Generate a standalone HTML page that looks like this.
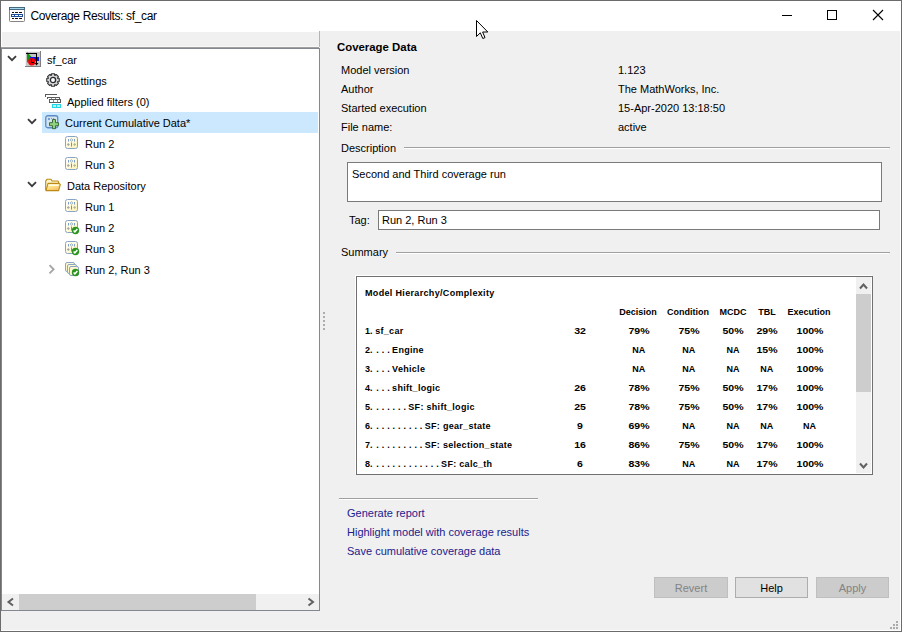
<!DOCTYPE html>
<html><head><meta charset="utf-8">
<style>
html,body{margin:0;padding:0;}
body{width:902px;height:632px;position:relative;overflow:hidden;background:#f0f0f0;font-family:"Liberation Sans",sans-serif;color:#000;}
.a{position:absolute;}
.t{position:absolute;white-space:nowrap;font-size:11px;line-height:11px;}
.b{font-weight:bold;}
.hb{position:absolute;font-size:9px;line-height:9px;font-weight:bold;white-space:nowrap;}
.c{text-align:center;}
</style></head><body>
<!-- window frame -->
<div class="a" style="left:0;top:0;width:902px;height:632px;background:#f0f0f0;"></div>
<!-- title bar -->
<div class="a" style="left:1px;top:1px;width:900px;height:30px;background:#fff;"></div>
<!-- borders -->
<div class="a" style="left:0;top:0;width:902px;height:1px;background:#6b6b6b;"></div>
<div class="a" style="left:0;top:0;width:1px;height:632px;background:#6b6b6b;"></div>
<div class="a" style="left:901px;top:0;width:1px;height:632px;background:#6b6b6b;"></div>
<div class="a" style="left:0;top:631px;width:902px;height:1px;background:#6b6b6b;"></div>
<div class="a" style="left:1px;top:630px;width:900px;height:1px;background:#fff;"></div>
<div class="a" style="left:900px;top:31px;width:1px;height:600px;background:#fff;"></div>

<!-- title icon -->
<svg class="a" style="left:9px;top:7px" width="16" height="15" viewBox="0 0 16 15">
<rect x="0.5" y="0.5" width="15" height="14" rx="0.8" fill="#fff" stroke="#858585"/>
<rect x="0" y="0" width="16" height="3" fill="#44697c"/>
<rect x="1" y="1" width="14" height="1" fill="#a6d6f0"/>
<rect x="3" y="5" width="2" height="1" fill="#111"/><rect x="6" y="5" width="3" height="1" fill="#111"/><rect x="10" y="5" width="3" height="1" fill="#111"/>
<rect x="2" y="7" width="12" height="3" fill="#1c4f9c"/>
<rect x="3" y="8" width="2" height="1" fill="#fff"/><rect x="6" y="8" width="3" height="1" fill="#fff"/><rect x="10" y="8" width="3" height="1" fill="#fff"/>
<rect x="3" y="11" width="2" height="1" fill="#111"/><rect x="6" y="11" width="3" height="1" fill="#111"/><rect x="10" y="11" width="3" height="1" fill="#111"/>
</svg>
<div class="t" style="left:30.5px;top:10px;font-size:12px;line-height:12px;letter-spacing:-0.36px;">Coverage Results: sf_car</div>

<!-- window controls -->
<div class="a" style="left:782px;top:15px;width:10px;height:1px;background:#000;"></div>
<div class="a" style="left:827px;top:10px;width:8px;height:8px;border:1px solid #000;"></div>
<svg class="a" style="left:872px;top:9px" width="12" height="12" viewBox="0 0 12 12"><path d="M1 1L11 11M11 1L1 11" stroke="#000" stroke-width="1.1"/></svg>

<!-- mouse cursor -->
<svg class="a" style="left:476px;top:20px" width="13" height="20" viewBox="0 0 13 20">
<path d="M0.5 0.5 L0.5 16.5 L4.3 12.8 L6.8 18.5 L9 17.6 L6.6 12 L11.8 12 Z" fill="#fff" stroke="#000" stroke-width="1" stroke-linejoin="miter"/>
</svg>

<!-- left tree panel -->
<div class="a" style="left:1px;top:31px;width:318px;height:16px;background:#fff;"></div>
<div class="a" style="left:2px;top:32px;width:317px;height:15px;background:#f0f0f0;"></div>
<div class="a" style="left:319px;top:31px;width:1px;height:16px;background:#b4b4b4;"></div>
<div class="a" style="left:1px;top:46px;width:318px;height:1px;background:#f8f8f8;"></div>
<div class="a" style="left:1px;top:47px;width:318px;height:1px;background:#a0a0a0;"></div>
<div class="a" style="left:1px;top:48px;width:317px;height:561px;border:1px solid #828790;background:#fff;"></div>
<!-- selection -->
<div class="a" style="left:42px;top:112px;width:276px;height:21px;background:#cce8ff;"></div>

<!-- chevrons -->
<svg class="a" style="left:7px;top:55px" width="10" height="7"><path d="M1 1.2L5 5.2L9 1.2" fill="none" stroke="#3a3a3a" stroke-width="1.8"/></svg>
<svg class="a" style="left:27px;top:118px" width="10" height="7"><path d="M1 1.2L5 5.2L9 1.2" fill="none" stroke="#3a3a3a" stroke-width="1.8"/></svg>
<svg class="a" style="left:27px;top:181px" width="10" height="7"><path d="M1 1.2L5 5.2L9 1.2" fill="none" stroke="#3a3a3a" stroke-width="1.8"/></svg>
<svg class="a" style="left:48px;top:264px" width="8" height="11"><path d="M1.5 1.2L5.6 5.3L1.5 9.4" fill="none" stroke="#a6a6a6" stroke-width="1.9"/></svg>

<!-- sf_car icon -->
<svg class="a" style="left:25px;top:51px" width="16" height="16" viewBox="0 0 16 16" shape-rendering="crispEdges">
<rect x="0" y="0" width="16" height="16" fill="#7f7f7f"/>
<rect x="0" y="0" width="15" height="15" fill="#f2f2f2"/>
<rect x="1" y="1" width="14" height="14" fill="#c6c6c6"/>
<path d="M2 1 L2 12 L7 6.5 Z" fill="#0b9a0b" shape-rendering="auto"/>
<rect x="5" y="6" width="9" height="4" fill="#0a12f0"/>
<circle cx="6.8" cy="10.8" r="3.7" fill="#f20000" shape-rendering="auto"/>
<path d="M6.5 8 V11.5 H9" fill="none" stroke="#000" stroke-width="1"/>
<path d="M1 2.5 H11.5 V13" fill="none" stroke="#000" stroke-width="1"/>
<path d="M9.5 12 H13.5 L11.5 14.5 Z" fill="#000" shape-rendering="auto"/>
</svg>
<div class="t" style="left:47px;top:55px;">sf_car</div>

<!-- gear -->
<svg class="a" style="left:46px;top:73px" width="14" height="14" viewBox="0 0 14 14">
<path d="M5.01 2.52 L5.56 0.76 L8.44 0.76 L8.99 2.52 L8.76 2.43 L10.39 1.57 L12.43 3.61 L11.57 5.24 L11.48 5.01 L13.24 5.56 L13.24 8.44 L11.48 8.99 L11.57 8.76 L12.43 10.39 L10.39 12.43 L8.76 11.57 L8.99 11.48 L8.44 13.24 L5.56 13.24 L5.01 11.48 L5.24 11.57 L3.61 12.43 L1.57 10.39 L2.43 8.76 L2.52 8.99 L0.76 8.44 L0.76 5.56 L2.52 5.01 L2.43 5.24 L1.57 3.61 L3.61 1.57 L5.24 2.43 Z" fill="#d6d6d6" stroke="#2e2e2e" stroke-width="1.1" stroke-linejoin="round"/>
<circle cx="7" cy="7" r="2.6" fill="#fff" stroke="#262a30" stroke-width="1.3"/>
</svg>
<div class="t" style="left:67px;top:76px;">Settings</div>

<!-- filter icon -->
<svg class="a" style="left:45px;top:93px" width="17" height="16" viewBox="0 0 17 16" shape-rendering="crispEdges">
<path d="M0.5 4 V1.5 H12" fill="none" stroke="#5a5a5a" stroke-width="1"/>
<path d="M2.5 6 V4.5 H14.5 V6" fill="none" stroke="#5a5a5a" stroke-width="1"/>
<rect x="6" y="5" width="1" height="1" fill="#8a8a8a"/><rect x="10" y="5" width="1" height="1" fill="#8a8a8a"/>
<path d="M4.5 6.5 H15.5 V9.5 H4.5 Z" fill="#fff" stroke="#5a5a5a" stroke-width="1"/>
<rect x="8" y="7" width="1" height="2" fill="#8a8a8a"/><rect x="12" y="7" width="1" height="2" fill="#8a8a8a"/>
<rect x="7" y="11" width="9" height="4" fill="#22d6e6"/>
<rect x="8" y="12" width="3" height="2" fill="#bdeff5"/><rect x="12" y="12" width="3" height="2" fill="#bdeff5"/>
</svg>
<div class="t" style="left:67px;top:97px;">Applied filters (0)</div>

<!-- cumulative icon -->
<svg class="a" style="left:45px;top:115px" width="15" height="15" viewBox="0 0 15 15">
<rect x="0.75" y="0.75" width="12" height="12" rx="2" fill="#d3e3ee" stroke="#5b8cc8" stroke-width="1.3"/>
<path d="M3 3h2v2h-2zM6 3h1v1h-1zM8 3h1v1h-1z" fill="#6f9fd6"/>
<path d="M7.5 4.5 h3 v3.2 h3 v3 h-3 v3 h-3 v-3 h-3 v-3 h3 z" fill="#8fd47a" stroke="#3b6b3e" stroke-width="1"/>
</svg>
<div class="t" style="left:65px;top:118px;">Current Cumulative Data*</div>

<!-- run icon template used multiple times -->
<svg class="a" style="left:65px;top:136px" width="15" height="15" viewBox="0 0 15 15">
<defs><linearGradient id="gY136" x1="0" y1="0" x2="1" y2="1"><stop offset="0" stop-color="#ffffff"/><stop offset="0.45" stop-color="#fffbe0"/><stop offset="1" stop-color="#fff2a8"/></linearGradient></defs>
<rect x="0.5" y="0.5" width="12" height="12" rx="2" fill="url(#gY136)" stroke="#8aa4c6" stroke-width="1"/>
<rect x="3" y="3" width="1" height="2.5" fill="#7d9ec8"/><rect x="9" y="3" width="1" height="2.5" fill="#7d9ec8"/>
<path d="M6.5 2.6 L7.9 4 L6.5 5.4 L5.1 4 Z" fill="#e8f0f8" stroke="#86a6c4" stroke-width="0.8"/>
<path d="M3.3 7 L4.8 8.5 L3.3 10 L1.8 8.5 Z" fill="#a4a4a4"/>
<rect x="6" y="6.5" width="1" height="4" fill="#8c8c8c"/>
<path d="M9.6 7 L11.1 8.5 L9.6 10 L8.1 8.5 Z" fill="#a9b89a"/>
</svg>
<div class="t" style="left:85px;top:139px;">Run 2</div>
<svg class="a" style="left:65px;top:157px" width="15" height="15" viewBox="0 0 15 15">
<defs><linearGradient id="gY157" x1="0" y1="0" x2="1" y2="1"><stop offset="0" stop-color="#ffffff"/><stop offset="0.45" stop-color="#fffbe0"/><stop offset="1" stop-color="#fff2a8"/></linearGradient></defs>
<rect x="0.5" y="0.5" width="12" height="12" rx="2" fill="url(#gY157)" stroke="#8aa4c6" stroke-width="1"/>
<rect x="3" y="3" width="1" height="2.5" fill="#7d9ec8"/><rect x="9" y="3" width="1" height="2.5" fill="#7d9ec8"/>
<path d="M6.5 2.6 L7.9 4 L6.5 5.4 L5.1 4 Z" fill="#e8f0f8" stroke="#86a6c4" stroke-width="0.8"/>
<path d="M3.3 7 L4.8 8.5 L3.3 10 L1.8 8.5 Z" fill="#a4a4a4"/>
<rect x="6" y="6.5" width="1" height="4" fill="#8c8c8c"/>
<path d="M9.6 7 L11.1 8.5 L9.6 10 L8.1 8.5 Z" fill="#a9b89a"/>
</svg>
<div class="t" style="left:85px;top:160px;">Run 3</div>

<!-- folder -->
<svg class="a" style="left:45px;top:178px" width="17" height="15" viewBox="0 0 17 15">
<defs><linearGradient id="fg" x1="0" y1="0" x2="0.6" y2="1"><stop offset="0" stop-color="#fff7c4"/><stop offset="0.5" stop-color="#ffe38a"/><stop offset="1" stop-color="#f6c066"/></linearGradient></defs>
<path d="M0.7 12.3 V3 L2 1.3 H6 L7 3 H12.8 L13.6 4 V6" fill="#fff6cc" stroke="#bd8a16" stroke-width="1.1"/>
<path d="M1 12.6 L3 5.4 H14.2 L15.3 6.6 L13.6 12.6 Z" fill="url(#fg)" stroke="#bd8a16" stroke-width="1.1" stroke-linejoin="round"/>
<path d="M3.8 6.6 H13.8 L13.5 8 H3.4 Z" fill="#fffbe0"/>
</svg>
<div class="t" style="left:67px;top:181px;">Data Repository</div>

<svg class="a" style="left:65px;top:199px" width="15" height="15" viewBox="0 0 15 15">
<defs><linearGradient id="gY199" x1="0" y1="0" x2="1" y2="1"><stop offset="0" stop-color="#ffffff"/><stop offset="0.45" stop-color="#fffbe0"/><stop offset="1" stop-color="#fff2a8"/></linearGradient></defs>
<rect x="0.5" y="0.5" width="12" height="12" rx="2" fill="url(#gY199)" stroke="#8aa4c6" stroke-width="1"/>
<rect x="3" y="3" width="1" height="2.5" fill="#7d9ec8"/><rect x="9" y="3" width="1" height="2.5" fill="#7d9ec8"/>
<path d="M6.5 2.6 L7.9 4 L6.5 5.4 L5.1 4 Z" fill="#e8f0f8" stroke="#86a6c4" stroke-width="0.8"/>
<path d="M3.3 7 L4.8 8.5 L3.3 10 L1.8 8.5 Z" fill="#a4a4a4"/>
<rect x="6" y="6.5" width="1" height="4" fill="#8c8c8c"/>
<path d="M9.6 7 L11.1 8.5 L9.6 10 L8.1 8.5 Z" fill="#a9b89a"/>
</svg>
<div class="t" style="left:85px;top:202px;">Run 1</div>

<svg class="a" style="left:65px;top:220px" width="15" height="15" viewBox="0 0 15 15">
<defs><linearGradient id="gY220" x1="0" y1="0" x2="1" y2="1"><stop offset="0" stop-color="#ffffff"/><stop offset="0.45" stop-color="#fffbe0"/><stop offset="1" stop-color="#fff2a8"/></linearGradient></defs>
<rect x="0.5" y="0.5" width="12" height="12" rx="2" fill="url(#gY220)" stroke="#8aa4c6" stroke-width="1"/>
<rect x="3" y="3" width="1" height="2.5" fill="#7d9ec8"/><rect x="9" y="3" width="1" height="2.5" fill="#7d9ec8"/>
<path d="M6.5 2.6 L7.9 4 L6.5 5.4 L5.1 4 Z" fill="#e8f0f8" stroke="#86a6c4" stroke-width="0.8"/>
<path d="M3.3 7 L4.8 8.5 L3.3 10 L1.8 8.5 Z" fill="#a4a4a4"/>
<rect x="6" y="6.5" width="1" height="4" fill="#8c8c8c"/>
<path d="M9.6 7 L11.1 8.5 L9.6 10 L8.1 8.5 Z" fill="#a9b89a"/>
<circle cx="10.5" cy="10.5" r="3.7" fill="#2b9420"/>
<path d="M8.6 10.5 L9.9 11.8 L12.4 9.1" fill="none" stroke="#fff" stroke-width="1.5"/></svg>
<div class="t" style="left:85px;top:223px;">Run 2</div>

<svg class="a" style="left:65px;top:241px" width="15" height="15" viewBox="0 0 15 15">
<defs><linearGradient id="gY241" x1="0" y1="0" x2="1" y2="1"><stop offset="0" stop-color="#ffffff"/><stop offset="0.45" stop-color="#fffbe0"/><stop offset="1" stop-color="#fff2a8"/></linearGradient></defs>
<rect x="0.5" y="0.5" width="12" height="12" rx="2" fill="url(#gY241)" stroke="#8aa4c6" stroke-width="1"/>
<rect x="3" y="3" width="1" height="2.5" fill="#7d9ec8"/><rect x="9" y="3" width="1" height="2.5" fill="#7d9ec8"/>
<path d="M6.5 2.6 L7.9 4 L6.5 5.4 L5.1 4 Z" fill="#e8f0f8" stroke="#86a6c4" stroke-width="0.8"/>
<path d="M3.3 7 L4.8 8.5 L3.3 10 L1.8 8.5 Z" fill="#a4a4a4"/>
<rect x="6" y="6.5" width="1" height="4" fill="#8c8c8c"/>
<path d="M9.6 7 L11.1 8.5 L9.6 10 L8.1 8.5 Z" fill="#a9b89a"/>
<circle cx="10.5" cy="10.5" r="3.7" fill="#2b9420"/>
<path d="M8.6 10.5 L9.9 11.8 L12.4 9.1" fill="none" stroke="#fff" stroke-width="1.5"/></svg>
<div class="t" style="left:85px;top:244px;">Run 3</div>

<svg class="a" style="left:65px;top:262px" width="15" height="15" viewBox="0 0 15 15">
<rect x="0.5" y="0.5" width="9" height="9" rx="1.5" fill="#fdf8cf" stroke="#8ea6c6" stroke-width="1"/>
<rect x="2.5" y="2.5" width="9" height="9" rx="1.5" fill="#fdf8cf" stroke="#8ea6c6" stroke-width="1"/>
<rect x="4.5" y="4.5" width="9" height="9" rx="1.5" fill="#fdf8cf" stroke="#8ea6c6" stroke-width="1"/>
<circle cx="10.5" cy="10.5" r="3.7" fill="#2b9420"/>
<path d="M8.6 10.5 L9.9 11.8 L12.4 9.1" fill="none" stroke="#fff" stroke-width="1.5"/>
</svg>
<div class="t" style="left:85px;top:265px;">Run 2, Run 3</div>

<!-- horizontal scrollbar -->
<div class="a" style="left:2px;top:594px;width:317px;height:16px;background:#f0f0f0;"></div>
<div class="a" style="left:19px;top:594px;width:237px;height:16px;background:#cdcdcd;"></div>
<svg class="a" style="left:6px;top:597px" width="10" height="10"><path d="M7 1.5L2.5 5L7 8.5" fill="none" stroke="#606060" stroke-width="2"/></svg>
<svg class="a" style="left:306px;top:597px" width="10" height="10"><path d="M2.5 1.5L7 5L2.5 8.5" fill="none" stroke="#606060" stroke-width="2"/></svg>

<!-- splitter dots -->
<div class="a" style="left:323px;top:312px;width:2px;height:2px;background:#adadad;"></div>
<div class="a" style="left:323px;top:316px;width:2px;height:2px;background:#adadad;"></div>
<div class="a" style="left:323px;top:320px;width:2px;height:2px;background:#adadad;"></div>
<div class="a" style="left:323px;top:324px;width:2px;height:2px;background:#adadad;"></div>
<div class="a" style="left:323px;top:328px;width:2px;height:2px;background:#adadad;"></div>

<!-- right panel -->
<div class="t b" style="left:337px;top:42px;font-size:11.4px;">Coverage Data</div>
<div class="t" style="left:341px;top:65px;">Model version</div>
<div class="t" style="left:341px;top:84px;">Author</div>
<div class="t" style="left:341px;top:103px;">Started execution</div>
<div class="t" style="left:341px;top:122px;">File name:</div>
<div class="t" style="left:618px;top:65px;">1.123</div>
<div class="t" style="left:618px;top:84px;">The MathWorks, Inc.</div>
<div class="t" style="left:618px;top:103px;">15-Apr-2020 13:18:50</div>
<div class="t" style="left:618px;top:122px;">active</div>

<div class="t" style="left:341px;top:143px;">Description</div>
<div class="a" style="left:404px;top:147px;width:486px;height:1px;background:#a0a0a0;"></div><div class="a" style="left:404px;top:148px;width:485px;height:1px;background:#fff;"></div>
<div class="a" style="left:347px;top:162px;width:533px;height:38px;border:1px solid #7a7a7a;background:#fff;"></div>
<div class="t" style="left:352px;top:169px;">Second and Third coverage run</div>

<div class="t" style="left:349px;top:215px;">Tag:</div>
<div class="a" style="left:378px;top:210px;width:500px;height:18px;border:1px solid #7a7a7a;background:#fff;"></div>
<div class="t" style="left:382px;top:215px;">Run 2, Run 3</div>

<div class="t" style="left:341px;top:247px;">Summary</div>
<div class="a" style="left:396px;top:252px;width:494px;height:1px;background:#a0a0a0;"></div><div class="a" style="left:396px;top:253px;width:493px;height:1px;background:#fff;"></div>

<!-- summary browser -->
<div class="a" style="left:355px;top:275px;width:517px;height:199px;background:#fff;"></div>
<div class="a" style="left:356px;top:276px;width:515px;height:197px;border:1px solid #707070;background:#fff;overflow:hidden;">
</div>
<!-- vertical scrollbar -->
<div class="a" style="left:856px;top:277px;width:15px;height:196px;background:#f0f0f0;"></div>
<div class="a" style="left:856px;top:294px;width:15px;height:98px;background:#cdcdcd;"></div>
<svg class="a" style="left:859px;top:282px" width="9" height="9"><path d="M1 6.5L4.5 2.5L8 6.5" fill="none" stroke="#606060" stroke-width="2"/></svg>
<svg class="a" style="left:859px;top:461px" width="9" height="9"><path d="M1 2.5L4.5 6.5L8 2.5" fill="none" stroke="#606060" stroke-width="2"/></svg>

<div class="hb" style="left:365px;top:289px;letter-spacing:0.33px;">Model Hierarchy/Complexity</div>

<div class="hb c" style="left:608px;top:308px;width:60px;">Decision</div>
<div class="hb c" style="left:658px;top:308px;width:60px;">Condition</div>
<div class="hb c" style="left:703px;top:308px;width:60px;">MCDC</div>
<div class="hb c" style="left:737px;top:308px;width:60px;">TBL</div>
<div class="hb c" style="left:779px;top:308px;width:60px;">Execution</div>

<!--ROWS-->
<div class="hb" style="left:365px;top:327px;">1.</div>
<div class="hb" style="left:375.2px;top:327px;letter-spacing:0.3px;">sf_car</div>
<div class="hb c" style="left:549.8px;top:327px;width:60px;transform:scaleX(1.17);">32</div>
<div class="hb c" style="left:608.7px;top:327px;width:60px;transform:scaleX(1.17);">79%</div>
<div class="hb c" style="left:658.7px;top:327px;width:60px;transform:scaleX(1.17);">75%</div>
<div class="hb c" style="left:703.0px;top:327px;width:60px;transform:scaleX(1.17);">50%</div>
<div class="hb c" style="left:736.8px;top:327px;width:60px;transform:scaleX(1.17);">29%</div>
<div class="hb c" style="left:779.5px;top:327px;width:60px;transform:scaleX(1.17);">100%</div>
<div class="hb" style="left:365px;top:346px;">2.</div>
<div class="hb" style="left:376.3px;top:346px;letter-spacing:2.94px;">...</div>
<div class="hb" style="left:392.1px;top:346px;letter-spacing:0.3px;">Engine</div>
<div class="hb c" style="left:608.7px;top:346px;width:60px;">NA</div>
<div class="hb c" style="left:658.7px;top:346px;width:60px;">NA</div>
<div class="hb c" style="left:703.0px;top:346px;width:60px;">NA</div>
<div class="hb c" style="left:736.8px;top:346px;width:60px;transform:scaleX(1.17);">15%</div>
<div class="hb c" style="left:779.5px;top:346px;width:60px;transform:scaleX(1.17);">100%</div>
<div class="hb" style="left:365px;top:365px;">3.</div>
<div class="hb" style="left:376.3px;top:365px;letter-spacing:2.94px;">...</div>
<div class="hb" style="left:392.1px;top:365px;letter-spacing:0.3px;">Vehicle</div>
<div class="hb c" style="left:608.7px;top:365px;width:60px;">NA</div>
<div class="hb c" style="left:658.7px;top:365px;width:60px;">NA</div>
<div class="hb c" style="left:703.0px;top:365px;width:60px;">NA</div>
<div class="hb c" style="left:736.8px;top:365px;width:60px;">NA</div>
<div class="hb c" style="left:779.5px;top:365px;width:60px;transform:scaleX(1.17);">100%</div>
<div class="hb" style="left:365px;top:384px;">4.</div>
<div class="hb" style="left:376.3px;top:384px;letter-spacing:2.94px;">...</div>
<div class="hb" style="left:392.1px;top:384px;letter-spacing:0.3px;">shift_logic</div>
<div class="hb c" style="left:549.8px;top:384px;width:60px;transform:scaleX(1.17);">26</div>
<div class="hb c" style="left:608.7px;top:384px;width:60px;transform:scaleX(1.17);">78%</div>
<div class="hb c" style="left:658.7px;top:384px;width:60px;transform:scaleX(1.17);">75%</div>
<div class="hb c" style="left:703.0px;top:384px;width:60px;transform:scaleX(1.17);">50%</div>
<div class="hb c" style="left:736.8px;top:384px;width:60px;transform:scaleX(1.17);">17%</div>
<div class="hb c" style="left:779.5px;top:384px;width:60px;transform:scaleX(1.17);">100%</div>
<div class="hb" style="left:365px;top:403px;">5.</div>
<div class="hb" style="left:376.3px;top:403px;letter-spacing:2.94px;">......</div>
<div class="hb" style="left:408.3px;top:403px;letter-spacing:0.3px;">SF: shift_logic</div>
<div class="hb c" style="left:549.8px;top:403px;width:60px;transform:scaleX(1.17);">25</div>
<div class="hb c" style="left:608.7px;top:403px;width:60px;transform:scaleX(1.17);">78%</div>
<div class="hb c" style="left:658.7px;top:403px;width:60px;transform:scaleX(1.17);">75%</div>
<div class="hb c" style="left:703.0px;top:403px;width:60px;transform:scaleX(1.17);">50%</div>
<div class="hb c" style="left:736.8px;top:403px;width:60px;transform:scaleX(1.17);">17%</div>
<div class="hb c" style="left:779.5px;top:403px;width:60px;transform:scaleX(1.17);">100%</div>
<div class="hb" style="left:365px;top:422px;">6.</div>
<div class="hb" style="left:376.3px;top:422px;letter-spacing:2.94px;">.........</div>
<div class="hb" style="left:424.7px;top:422px;letter-spacing:0.3px;">SF: gear_state</div>
<div class="hb c" style="left:549.8px;top:422px;width:60px;transform:scaleX(1.17);">9</div>
<div class="hb c" style="left:608.7px;top:422px;width:60px;transform:scaleX(1.17);">69%</div>
<div class="hb c" style="left:658.7px;top:422px;width:60px;">NA</div>
<div class="hb c" style="left:703.0px;top:422px;width:60px;">NA</div>
<div class="hb c" style="left:736.8px;top:422px;width:60px;">NA</div>
<div class="hb c" style="left:779.5px;top:422px;width:60px;">NA</div>
<div class="hb" style="left:365px;top:441px;">7.</div>
<div class="hb" style="left:376.3px;top:441px;letter-spacing:2.94px;">.........</div>
<div class="hb" style="left:424.7px;top:441px;letter-spacing:0.3px;">SF: selection_state</div>
<div class="hb c" style="left:549.8px;top:441px;width:60px;transform:scaleX(1.17);">16</div>
<div class="hb c" style="left:608.7px;top:441px;width:60px;transform:scaleX(1.17);">86%</div>
<div class="hb c" style="left:658.7px;top:441px;width:60px;transform:scaleX(1.17);">75%</div>
<div class="hb c" style="left:703.0px;top:441px;width:60px;transform:scaleX(1.17);">50%</div>
<div class="hb c" style="left:736.8px;top:441px;width:60px;transform:scaleX(1.17);">17%</div>
<div class="hb c" style="left:779.5px;top:441px;width:60px;transform:scaleX(1.17);">100%</div>
<div class="hb" style="left:365px;top:460px;">8.</div>
<div class="hb" style="left:376.3px;top:460px;letter-spacing:2.94px;">............</div>
<div class="hb" style="left:441.1px;top:460px;letter-spacing:0.3px;">SF: calc_th</div>
<div class="hb c" style="left:549.8px;top:460px;width:60px;transform:scaleX(1.17);">6</div>
<div class="hb c" style="left:608.7px;top:460px;width:60px;transform:scaleX(1.17);">83%</div>
<div class="hb c" style="left:658.7px;top:460px;width:60px;">NA</div>
<div class="hb c" style="left:703.0px;top:460px;width:60px;">NA</div>
<div class="hb c" style="left:736.8px;top:460px;width:60px;transform:scaleX(1.17);">17%</div>
<div class="hb c" style="left:779.5px;top:460px;width:60px;transform:scaleX(1.17);">100%</div>
<!--/ROWS-->

<!-- links -->
<div class="a" style="left:339px;top:498px;width:199px;height:1px;background:#a0a0a0;"></div><div class="a" style="left:339px;top:499px;width:199px;height:1px;background:#fff;"></div>
<div class="t" style="left:347px;top:508px;color:#20208e;">Generate report</div>
<div class="t" style="left:347px;top:527px;color:#20208e;">Highlight model with coverage results</div>
<div class="t" style="left:347px;top:546px;color:#20208e;">Save cumulative coverage data</div>

<!-- buttons -->
<div class="a" style="left:654px;top:577px;width:72px;height:19px;border:1px solid #bfbfbf;background:#cccccc;"></div>
<div class="t c" style="left:654px;top:583px;width:74px;color:#838383;">Revert</div>
<div class="a" style="left:735px;top:577px;width:71px;height:19px;border:1px solid #adadad;background:#e1e1e1;"></div>
<div class="t c" style="left:735px;top:583px;width:73px;">Help</div>
<div class="a" style="left:816px;top:577px;width:71px;height:19px;border:1px solid #bfbfbf;background:#cccccc;"></div>
<div class="t c" style="left:816px;top:583px;width:73px;color:#838383;">Apply</div>

<!-- resize grip -->
<div class="a" style="left:896px;top:621px;width:2px;height:2px;background:#ababab;"></div>
<div class="a" style="left:893px;top:624px;width:2px;height:2px;background:#ababab;"></div>
<div class="a" style="left:896px;top:624px;width:2px;height:2px;background:#ababab;"></div>
<div class="a" style="left:890px;top:627px;width:2px;height:2px;background:#ababab;"></div>
<div class="a" style="left:893px;top:627px;width:2px;height:2px;background:#ababab;"></div>
<div class="a" style="left:896px;top:627px;width:2px;height:2px;background:#ababab;"></div>
</body></html>
